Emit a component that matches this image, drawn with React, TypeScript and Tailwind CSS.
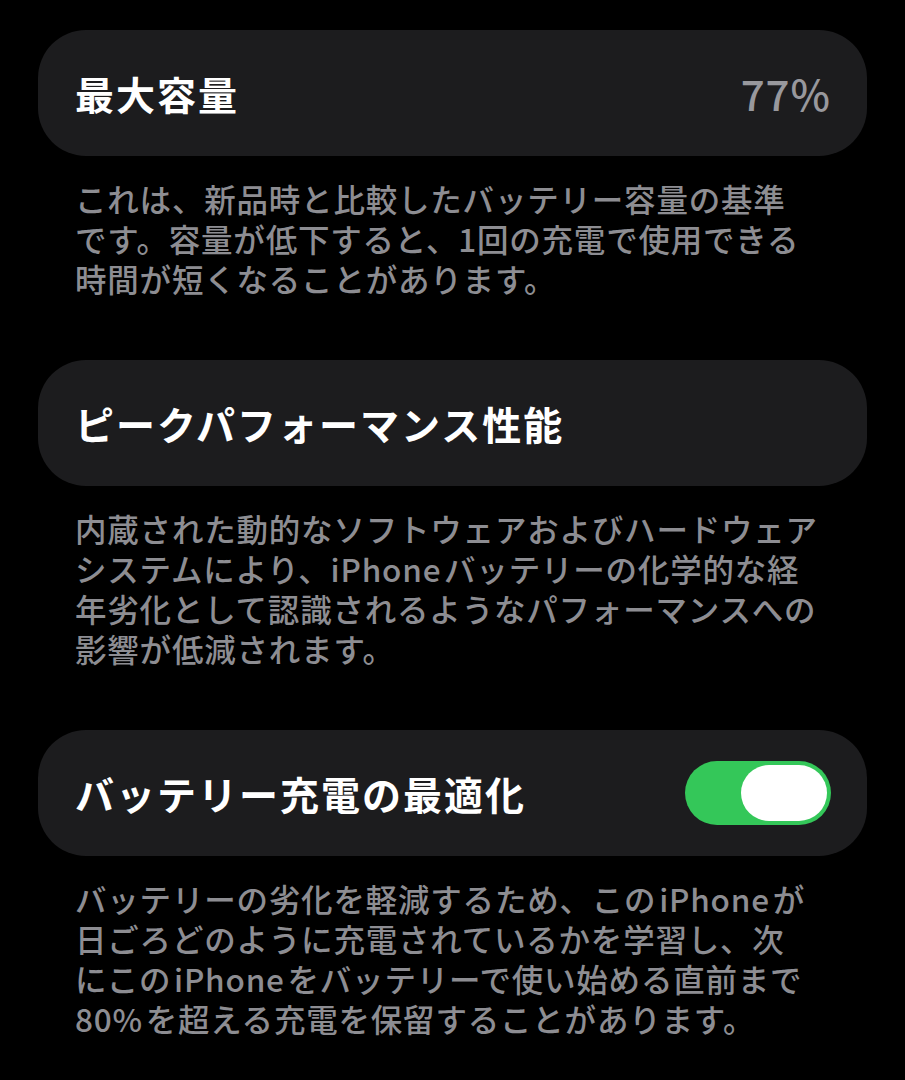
import { useState } from "react";

const jp = "font-['Noto_Sans_CJK_JP','Noto_Sans',sans-serif]";

function Row({ title, children }: { title: string; children?: React.ReactNode }) {
  return (
    <div className="flex h-[126px] items-center justify-between rounded-[48px] bg-[#1c1c1e] pl-[37px] pr-[36px]">
      <span className="text-[39px] font-bold leading-none tracking-[2px] text-white">{title}</span>
      {children}
    </div>
  );
}

function Footnote({ lines }: { lines: string[] }) {
  return (
    <div className="mb-[62px] mt-[22px] pl-[37px] text-[31.5px] font-medium leading-[40px] tracking-[0.8px] text-[#8d8d92]">
      {lines.map((l) => (
        <div key={l} className="whitespace-nowrap">
          {l}
        </div>
      ))}
    </div>
  );
}

function Toggle({ on, onChange }: { on: boolean; onChange: () => void }) {
  return (
    <button
      onClick={onChange}
      className={`flex h-[64px] w-[146px] items-center rounded-full px-[4px] ${
        on ? "justify-end bg-[#34c759]" : "justify-start bg-[#39393d]"
      }`}
    >
      <span className="h-[56px] w-[86px] rounded-full bg-white" />
    </button>
  );
}

export default function App() {
  const [optimized, setOptimized] = useState(true);

  return (
    <div className={`min-h-[1080px] bg-black px-[38px] pt-[30px] ${jp}`}>
      <Row title="最大容量">
        <span className="text-[42px] font-medium leading-none tracking-[1px] text-[#98989d]">77%</span>
      </Row>
      <Footnote
        lines={[
          "これは、新品時と比較したバッテリー容量の基準",
          "です。容量が低下すると、1回の充電で使用できる",
          "時間が短くなることがあります。",
        ]}
      />

      <Row title="ピークパフォーマンス性能" />
      <Footnote
        lines={[
          "内蔵された動的なソフトウェアおよびハードウェア",
          "システムにより、iPhone\u200aバッテリーの化学的な経",
          "年劣化として認識されるようなパフォーマンスへの",
          "影響が低減されます。",
        ]}
      />

      <Row title="バッテリー充電の最適化">
        <Toggle on={optimized} onChange={() => setOptimized((v) => !v)} />
      </Row>
      <Footnote
        lines={[
          "バッテリーの劣化を軽減するため、この\u200aiPhone\u200aが",
          "日ごろどのように充電されているかを学習し、次",
          "にこの\u200aiPhone\u200aをバッテリーで使い始める直前まで",
          "80%\u200aを超える充電を保留することがあります。",
        ]}
      />
    </div>
  );
}
